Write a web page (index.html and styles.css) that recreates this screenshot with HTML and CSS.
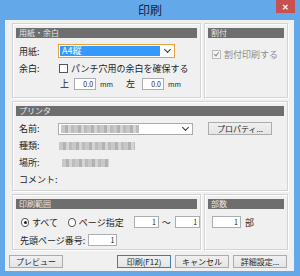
FILE: index.html
```html
<!DOCTYPE html>
<html lang="ja">
<head>
  <meta charset="UTF-8" />
  <title>印刷</title>
  <link rel="stylesheet" href="styles.css">
</head>
<body>

<div class="window">
  <div class="titlebar">
    <span></span>
    <span class="title">印刷</span>
    <span class="close">✕</span>
  </div>

  <div class="client">
    <div class="row top-row">
      <div class="group paper">
        <div class="group-head">用紙・余白</div>
        <div class="line paper-line">
          <span class="label">用紙:</span>
          <div class="select focused">
            <span class="selected">A4縦</span>
            <span class="chevron"></span>
          </div>
        </div>
        <div class="line margin-line">
          <span class="label">余白:</span>
          <span class="check"></span>
          <span>パンチ穴用の余白を確保する</span>
        </div>
        <div class="line offset-line">
          <span class="side">上</span>
          <span class="field w20">0.0</span>
          <span class="unit">mm</span>
          <span class="side left-side">左</span>
          <span class="field w20">0.0</span>
          <span class="unit">mm</span>
        </div>
      </div>

      <div class="group layout">
        <div class="group-head">割付</div>
        <div class="line layout-line disabled">
          <span class="check checked"></span>
          <span>割付印刷する</span>
        </div>
      </div>
    </div>

    <div class="group printer">
      <div class="group-head">プリンタ</div>
      <div class="line name-line">
        <span class="label">名前:</span>
        <div class="select printer-select">
          <span class="mosaic m-name"></span>
          <span class="chevron"></span>
        </div>
        <button class="btn prop-btn">プロパティ...</button>
      </div>
      <div class="line info-line">
        <span class="label">種類:</span>
        <span class="mosaic m-type"></span>
      </div>
      <div class="line info-line">
        <span class="label">場所:</span>
        <span class="mosaic m-place"></span>
      </div>
      <div class="line info-line">
        <span class="label">コメント:</span>
      </div>
    </div>

    <div class="row bottom-row">
      <div class="group range">
        <div class="group-head">印刷範囲</div>
        <div class="line radio-line">
          <span class="radio on"></span>
          <span>すべて</span>
          <span class="radio page-radio"></span>
          <span>ページ指定</span>
          <span class="field w28 from-field">1</span>
          <span class="tilde">〜</span>
          <span class="field w28">1</span>
        </div>
        <div class="line start-line">
          <span>先頭ページ番号:</span>
          <span class="field w28">1</span>
        </div>
      </div>

      <div class="group copies">
        <div class="group-head">部数</div>
        <div class="line radio-line">
          <span class="field w28">1</span>
          <span class="unit-ja">部</span>
        </div>
      </div>
    </div>

    <div class="buttons">
      <button class="btn preview-btn">プレビュー</button>
      <button class="btn default-btn">印刷(F12)</button>
      <button class="btn">キャンセル</button>
      <button class="btn">詳細設定...</button>
    </div>
  </div>
</div>

</body>
</html>
```

FILE: styles.css
```css
body {
  margin: 0;
  font-family: "Noto Sans CJK JP", sans-serif;
  font-size: 9px;
  color: #1e1e1e;
}
.window {
  width: 300px;
  height: 276px;
  background: #63a9ea;
  overflow: hidden;
}
.titlebar {
  height: 20px;
  display: grid;
  grid-template-columns: 1fr auto 1fr;
  align-items: start;
}
.title {
  font-size: 12px;
  line-height: 20px;
  color: #14233a;
}
.close {
  justify-self: end;
  width: 19px;
  height: 13px;
  margin-right: 5px;
  background: #c75050;
  color: white;
  font-size: 8px;
  font-weight: bold;
  line-height: 13px;
  text-align: center;
}
.client {
  margin: 0 6px 0 5px;
  height: 251px;
  background: #f0f0f0;
  padding: 3px 6px 0 7px;
  box-sizing: border-box;
}
.row {
  display: flex;
  gap: 3px;
}
.group {
  border: 1px solid #d3d3d3;
  box-shadow: inset 1px 1px 0 #fff, 1px 1px 0 #fff;
  box-sizing: border-box;
}
.group-head {
  margin: 4px 3px 0 3px;
  height: 10px;
  background: #6e6e6e;
  color: #e8e8e8;
  font-size: 8px;
  line-height: 10px;
  padding-left: 3px;
}
.paper { width: 189px; height: 75px; }
.layout { flex: 1; height: 75px; }
.printer { margin-top: 3px; height: 90px; }
.range { width: 189px; height: 56px; }
.copies { flex: 1; height: 56px; }
.bottom-row { margin-top: 3px; }

.line {
  display: flex;
  align-items: center;
  white-space: nowrap;
}
.label {
  width: 39px;
  padding-left: 6px;
  flex: none;
}
.paper-line { margin-top: 6px; height: 14px; }
.margin-line { margin-top: 4px; height: 12px; }
.offset-line { margin-top: 4px; height: 11px; padding-left: 47px; }

.select {
  height: 12px;
  border: 1px solid #acacac;
  background: #fff;
  display: flex;
  align-items: center;
  padding: 1px;
  box-sizing: border-box;
}
.select.focused {
  width: 117px;
  height: 14px;
  border-color: #e8a23c;
}
.selected {
  flex: 1;
  align-self: stretch;
  background: #3399ff;
  color: #fff;
  line-height: 10px;
  padding-left: 2px;
}
.chevron {
  width: 4px;
  height: 4px;
  border-right: 1.5px solid #333;
  border-bottom: 1.5px solid #333;
  transform: rotate(45deg);
  margin: -3px 3px 0 5px;
}
.check {
  width: 7px;
  height: 7px;
  border: 1px solid #555;
  background: #fff;
  margin-right: 3px;
  position: relative;
}
.margin-line .check { margin-left: 1px; }
.checked::after {
  content: "";
  position: absolute;
  left: 2px;
  top: 0;
  width: 2px;
  height: 4px;
  border-right: 1.5px solid #8a8a8a;
  border-bottom: 1.5px solid #8a8a8a;
  transform: rotate(40deg);
}
.disabled { color: #8d8d8d; }
.disabled .check { border-color: #bcbcbc; background: #f4f4f4; }
.layout-line { margin-top: 10px; padding-left: 7px; }

.field {
  height: 10px;
  border: 1px solid #abadb3;
  background: #fff;
  font-size: 7px;
  line-height: 10px;
  text-align: right;
  padding-right: 2px;
  box-sizing: content-box;
}
.w20 { width: 18px; }
.w28 { width: 25px; }
.side { margin-right: 5px; }
.left-side { margin-left: 13px; margin-right: 7px; }
.unit { font-size: 7px; margin-left: 4px; }

.name-line { margin-top: 6px; height: 13px; }
.printer-select { width: 135px; justify-content: space-between; }
.prop-btn { margin-left: 15px; width: 64px; }
.info-line { margin-top: 4px; height: 13px; }
.mosaic {
  display: inline-block;
  height: 8px;
  background: repeating-linear-gradient(90deg, #c8c8c8 0 4px, #b2b2b2 4px 7px, #d4d4d4 7px 10px, #bcbcbc 10px 13px);
}
.m-name { width: 78px; margin-left: 1px; }
.m-type { width: 76px; margin-left: 1px; }
.m-place { width: 47px; margin-left: 4px; }

.radio-line { margin-top: 7px; height: 12px; padding-left: 8px; }
.radio {
  width: 7px;
  height: 7px;
  border: 1px solid #555;
  border-radius: 50%;
  background: #fff;
  margin-right: 3px;
  position: relative;
}
.radio.on::after {
  content: "";
  position: absolute;
  left: 2px;
  top: 2px;
  width: 3px;
  height: 3px;
  border-radius: 50%;
  background: #222;
}
.page-radio { margin-left: 10px; }
.from-field { margin-left: 10px; }
.tilde { margin: 0 4px 0 3px; }
.start-line { margin-top: 6px; height: 12px; padding-left: 7px; gap: 3px; }
.copies .radio-line { padding-left: 7px; }
.unit-ja { margin-left: 4px; }

.btn {
  height: 13px;
  padding: 0;
  border: 1px solid #acacac;
  background: linear-gradient(#f0f0f0, #e5e5e5);
  font-family: "Noto Sans CJK JP", sans-serif;
  font-size: 8px;
  line-height: 11px;
  color: #1e1e1e;
}
.buttons {
  display: flex;
  gap: 4px;
  margin-top: 5px;
  margin-left: -3px;
}
.buttons .btn { width: 54px; }
.preview-btn { margin-right: 50px; }
.default-btn { border-color: #3c7fb1; }
```
